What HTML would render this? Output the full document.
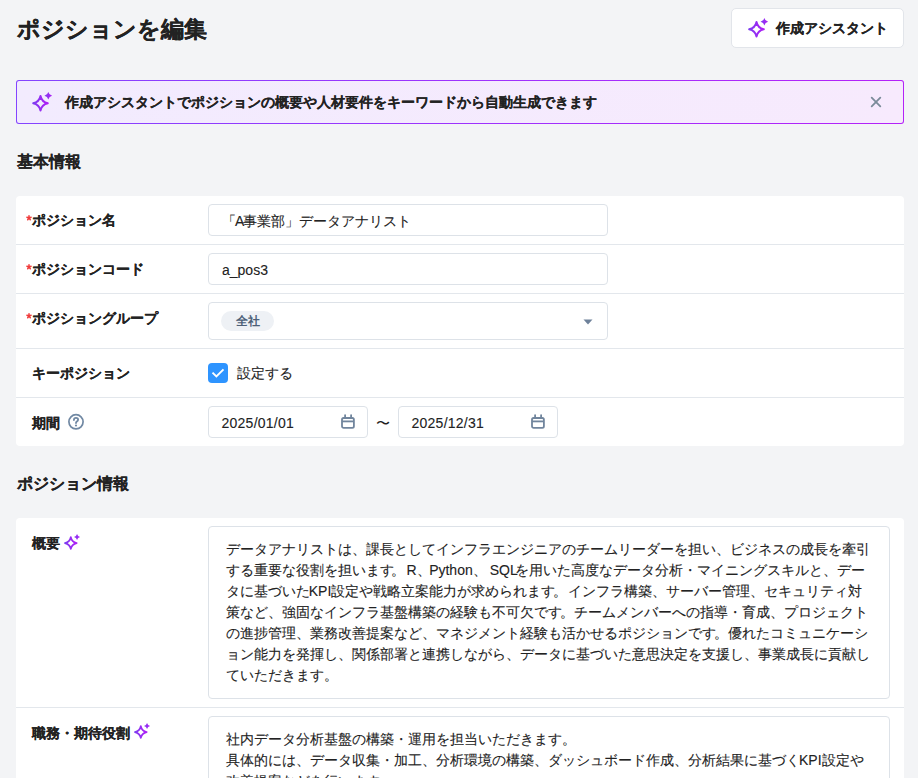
<!DOCTYPE html>
<html lang="ja">
<head>
<meta charset="utf-8">
<style>
*{box-sizing:border-box;margin:0;padding:0}
html,body{width:918px;height:778px;overflow:hidden;background:#f3f4f6}
body{font-family:"Liberation Sans",sans-serif;color:#222;position:relative}
.abs{position:absolute}
svg{overflow:visible}
.title{-webkit-text-stroke:0.2px #222;left:17px;top:11.5px;font-size:23px;font-weight:bold;line-height:34px;color:#222;white-space:nowrap}
.btn{left:731px;top:8px;width:173px;height:40px;background:#fff;border:1px solid #e2e5ea;border-radius:5px}
.btn svg{position:absolute;left:16px;top:9px}
.btn span{-webkit-text-stroke:0.1px #222;position:absolute;left:44px;top:9px;font-size:14px;font-weight:bold;line-height:20px;white-space:nowrap;color:#222}
.banner{left:16px;top:80px;width:888px;height:44px;border:1px solid transparent;border-radius:3px;background:linear-gradient(90deg,#f2ebfe,#f7eafd) padding-box,linear-gradient(90deg,#8444ff,#9d33fd 50%,#b422f8) border-box}
.banner svg.sp{position:absolute;left:15px;top:11px}
.banner span{-webkit-text-stroke:0.1px #222;position:absolute;left:48px;top:11px;font-size:14px;font-weight:bold;line-height:20px;white-space:nowrap;color:#222}
.banner svg.x{position:absolute;left:853px;top:15px}
.h2{-webkit-text-stroke:0.1px #222;left:16.5px;font-size:16px;font-weight:bold;line-height:22px;white-space:nowrap;color:#222}
.card{left:16px;width:888px;background:#fff;border-radius:4px}
.row{position:absolute;left:0;width:888px;border-bottom:1px solid #e3e7ec}
.lbl{-webkit-text-stroke:0.1px #222;position:absolute;left:16px;font-size:14px;font-weight:bold;line-height:20px;white-space:nowrap;color:#222}
.req{position:absolute;left:-7.3px;top:3.5px}
.inp{position:absolute;left:192px;background:#fff;border:1px solid #dde2e8;border-radius:4px}
.itext{-webkit-text-stroke:0.1px #222;position:absolute;left:13px;font-size:14px;line-height:20px;white-space:nowrap;color:#222}
.ta{position:absolute;left:192px;width:682px;background:#fff;border:1px solid #dde2e8;border-radius:4px}
.ta .tx{-webkit-text-stroke:0.1px #222;position:absolute;left:17px;top:12px;font-size:14px;line-height:21px;white-space:nowrap;color:#222}
</style>
</head>
<body>
<svg width="0" height="0" style="position:absolute">
<defs>
<linearGradient id="pg" x1="0" y1="0" x2="1" y2="0">
<stop offset="0" stop-color="#7d3cf0"/><stop offset="1" stop-color="#b01ef5"/>
</linearGradient>
</defs>
</svg>

<div class="abs title">ポジションを編集</div>

<div class="abs btn">
<svg width="20" height="20" viewBox="0 0 20 20"><path d="M8.5 4 Q9.8 10 15.8 11.3 Q9.8 12.6 8.5 18.6 Q7.2 12.6 1.2 11.3 Q7.2 10 8.5 4Z" fill="none" stroke="url(#pg)" stroke-width="2" stroke-linejoin="round"/><path d="M16.3 -0.1 Q17.1 2.9 20.1 3.7 Q17.1 4.5 16.3 7.5 Q15.5 4.5 12.5 3.7 Q15.5 2.9 16.3 -0.1Z" fill="url(#pg)"/></svg>
<span>作成アシスタント</span>
</div>

<div class="abs banner">
<svg class="sp" width="20" height="20" viewBox="0 0 20 20"><path d="M8.5 4 Q9.8 10 15.8 11.3 Q9.8 12.6 8.5 18.6 Q7.2 12.6 1.2 11.3 Q7.2 10 8.5 4Z" fill="none" stroke="url(#pg)" stroke-width="2" stroke-linejoin="round"/><path d="M16.3 -0.1 Q17.1 2.9 20.1 3.7 Q17.1 4.5 16.3 7.5 Q15.5 4.5 12.5 3.7 Q15.5 2.9 16.3 -0.1Z" fill="url(#pg)"/></svg>
<span>作成アシスタントでポジションの概要や人材要件をキーワードから自動生成できます</span>
<svg class="x" width="12" height="12" viewBox="0 0 12 12"><path d="M1.7 1.7L10.3 10.3M10.3 1.7L1.7 10.3" stroke="#7b8b99" stroke-width="1.8" stroke-linecap="round"/></svg>
</div>

<div class="abs h2" style="top:151px">基本情報</div>

<div class="abs card" style="top:196px;height:250px">
  <div class="row" style="top:0;height:49px">
    <div class="lbl" style="top:14px"><svg class="req" width="8" height="8" viewBox="0 0 8 8"><path d="M4 4L4.00 1.80M4 4L6.09 3.32M4 4L5.29 5.78M4 4L2.71 5.78M4 4L1.91 3.32" stroke="#f03c3c" stroke-width="1.5" stroke-linecap="round"/></svg>ポジション名</div>
    <div class="inp" style="top:8px;width:400px;height:32px"><div class="itext" style="top:6px"><span style="margin-right:-0.9px">「</span><span style="margin-right:-1px">A</span>事業部」データアナリスト</div></div>
  </div>
  <div class="row" style="top:49px;height:49px">
    <div class="lbl" style="top:14px"><svg class="req" width="8" height="8" viewBox="0 0 8 8"><path d="M4 4L4.00 1.80M4 4L6.09 3.32M4 4L5.29 5.78M4 4L2.71 5.78M4 4L1.91 3.32" stroke="#f03c3c" stroke-width="1.5" stroke-linecap="round"/></svg>ポジションコード</div>
    <div class="inp" style="top:8px;width:400px;height:32px"><div class="itext" style="top:6px">a_pos3</div></div>
  </div>
  <div class="row" style="top:98px;height:55px">
    <div class="lbl" style="top:14px"><svg class="req" width="8" height="8" viewBox="0 0 8 8"><path d="M4 4L4.00 1.80M4 4L6.09 3.32M4 4L5.29 5.78M4 4L2.71 5.78M4 4L1.91 3.32" stroke="#f03c3c" stroke-width="1.5" stroke-linecap="round"/></svg>ポジショングループ</div>
    <div class="inp" style="top:8px;width:400px;height:38px">
      <div style="position:absolute;left:12px;top:8px;width:53px;height:20px;border-radius:10px;background:#eef1f5;font-size:12px;font-weight:bold;color:#4d6078;line-height:20px;text-align:center">全社</div>
      <svg style="position:absolute;left:374px;top:16px" width="10" height="6" viewBox="0 0 10 6"><path d="M0.5 0.5H9.5L5 5.5Z" fill="#6e819a"/></svg>
    </div>
  </div>
  <div class="row" style="top:153px;height:49px">
    <div class="lbl" style="top:14px">キーポジション</div>
    <div style="position:absolute;left:192px;top:14px;width:20px;height:20px;border-radius:4px;background:#2e94ff">
      <svg width="20" height="20" viewBox="0 0 20 20" style="position:absolute;left:0;top:0"><path d="M4.5 9.6L8.4 13.5L15.5 6.4" fill="none" stroke="#fff" stroke-width="1.9" stroke-linecap="butt" stroke-linejoin="miter"/></svg>
    </div>
        <div class="itext" style="left:221px;top:13.5px;color:#222">設定する</div>
  </div>
  <div class="row" style="top:202px;height:48px;border-bottom:none">
    <div class="lbl" style="top:15px">期間</div>
    <svg style="position:absolute;left:52px;top:16px" width="16" height="16" viewBox="0 0 16 16"><circle cx="8" cy="7.8" r="7.1" fill="none" stroke="#7088a3" stroke-width="1.7"/><path d="M5.9 6Q5.9 3.9 8 3.9Q10.1 3.9 10.1 5.8Q10.1 7 8.7 7.6Q8 8 8 9.1" fill="none" stroke="#7088a3" stroke-width="1.8" stroke-linecap="round"/><circle cx="8" cy="11.5" r="1.1" fill="#7088a3"/></svg>
    <div class="inp" style="top:8px;width:160px;height:32px"><div class="itext" style="top:6px;left:12.5px;letter-spacing:0.25px">2025/01/01</div>
      <svg style="position:absolute;left:132px;top:7px" width="14" height="16" viewBox="0 0 14 16"><rect x="1" y="4" width="11.9" height="9.9" rx="1.6" fill="none" stroke="#71859d" stroke-width="1.8"/><path d="M1 7.4H13" stroke="#71859d" stroke-width="1.8"/><path d="M4.1 1.1V4M10.1 1.1V4" stroke="#71859d" stroke-width="1.8" stroke-linecap="round"/></svg>
    </div>
    <div style="position:absolute;left:360px;top:15px;font-size:14px;line-height:20px;color:#222">〜</div>
    <div class="inp" style="left:382px;top:8px;width:160px;height:32px"><div class="itext" style="top:6px;left:12.5px;letter-spacing:0.25px">2025/12/31</div>
      <svg style="position:absolute;left:132px;top:7px" width="14" height="16" viewBox="0 0 14 16"><rect x="1" y="4" width="11.9" height="9.9" rx="1.6" fill="none" stroke="#71859d" stroke-width="1.8"/><path d="M1 7.4H13" stroke="#71859d" stroke-width="1.8"/><path d="M4.1 1.1V4M10.1 1.1V4" stroke="#71859d" stroke-width="1.8" stroke-linecap="round"/></svg>
    </div>
  </div>
</div>

<div class="abs h2" style="top:473px">ポジション情報</div>

<div class="abs card" style="top:518px;height:300px">
  <div class="row" style="top:0;height:190px">
    <div class="lbl" style="top:15px">概要</div>
    <svg style="position:absolute;left:48px;top:16px" width="16" height="16" viewBox="0 0 20 20"><path d="M8.5 4 Q9.8 10 15.8 11.3 Q9.8 12.6 8.5 18.6 Q7.2 12.6 1.2 11.3 Q7.2 10 8.5 4Z" fill="none" stroke="url(#pg)" stroke-width="2.2" stroke-linejoin="round"/><path d="M16.3 -0.1 Q17.1 2.9 20.1 3.7 Q17.1 4.5 16.3 7.5 Q15.5 4.5 12.5 3.7 Q15.5 2.9 16.3 -0.1Z" fill="url(#pg)"/></svg>
    <div class="ta" style="top:8px;height:173px">
      <div class="tx">データアナリストは、課長としてインフラエンジニアのチームリーダーを担い、ビジネスの成長を牽引<br>する重要な役割を担いま<span style="margin-right:-2.8px">す</span><span style="margin-right:1.3px">。</span><span style="margin-right:-1.5px">R、</span><span style="margin-right:3px">Python、</span><span style="margin-right:-2.9px">SQL</span>を用いた高度なデータ分析・マイニングスキルと、デー<br>タに基づい<span style="margin-right:-1.3px">た</span><span style="margin-right:-0.4px">KPI</span>設定や戦略立案能力が求められま<span style="margin-right:-1.7px">す</span><span style="margin-right:0.5px">。</span>インフラ構築、サーバー管理、セキュリティ対<br>策など、強固なインフラ基盤構築の経験も不可欠で<span style="margin-right:-2.5px">す</span>。チームメンバーへの指導・育成、プロジェクト<br>の進捗管理、業務改善提案など、マネジメント経験も活かせるポジションで<span style="margin-right:-2.5px">す</span>。優れたコミュニケーシ<br>ョン能力を発揮し、関係部署と連携しながら、データに基づいた意思決定を支援し、事業成長に貢献し<br>ていただきます。</div>
    </div>
  </div>
  <div class="row" style="top:190px;height:110px;border-bottom:none">
    <div class="lbl" style="top:15px">職務・期待役割</div>
    <svg style="position:absolute;left:118px;top:15px" width="16" height="16" viewBox="0 0 20 20"><path d="M8.5 4 Q9.8 10 15.8 11.3 Q9.8 12.6 8.5 18.6 Q7.2 12.6 1.2 11.3 Q7.2 10 8.5 4Z" fill="none" stroke="url(#pg)" stroke-width="2.2" stroke-linejoin="round"/><path d="M16.3 -0.1 Q17.1 2.9 20.1 3.7 Q17.1 4.5 16.3 7.5 Q15.5 4.5 12.5 3.7 Q15.5 2.9 16.3 -0.1Z" fill="url(#pg)"/></svg>
    <div class="ta" style="top:8px;height:173px">
      <div class="tx">社内データ分析基盤の構築・運用を担当いただきます。<br>具体的には、データ収集・加工、分析環境の構築、ダッシュボード作成、分析結果に基づ<span style="margin-right:-1.0px">く</span>KPI設定や<br>改善提案などを行います。</div>
    </div>
  </div>
</div>
</body>
</html>
